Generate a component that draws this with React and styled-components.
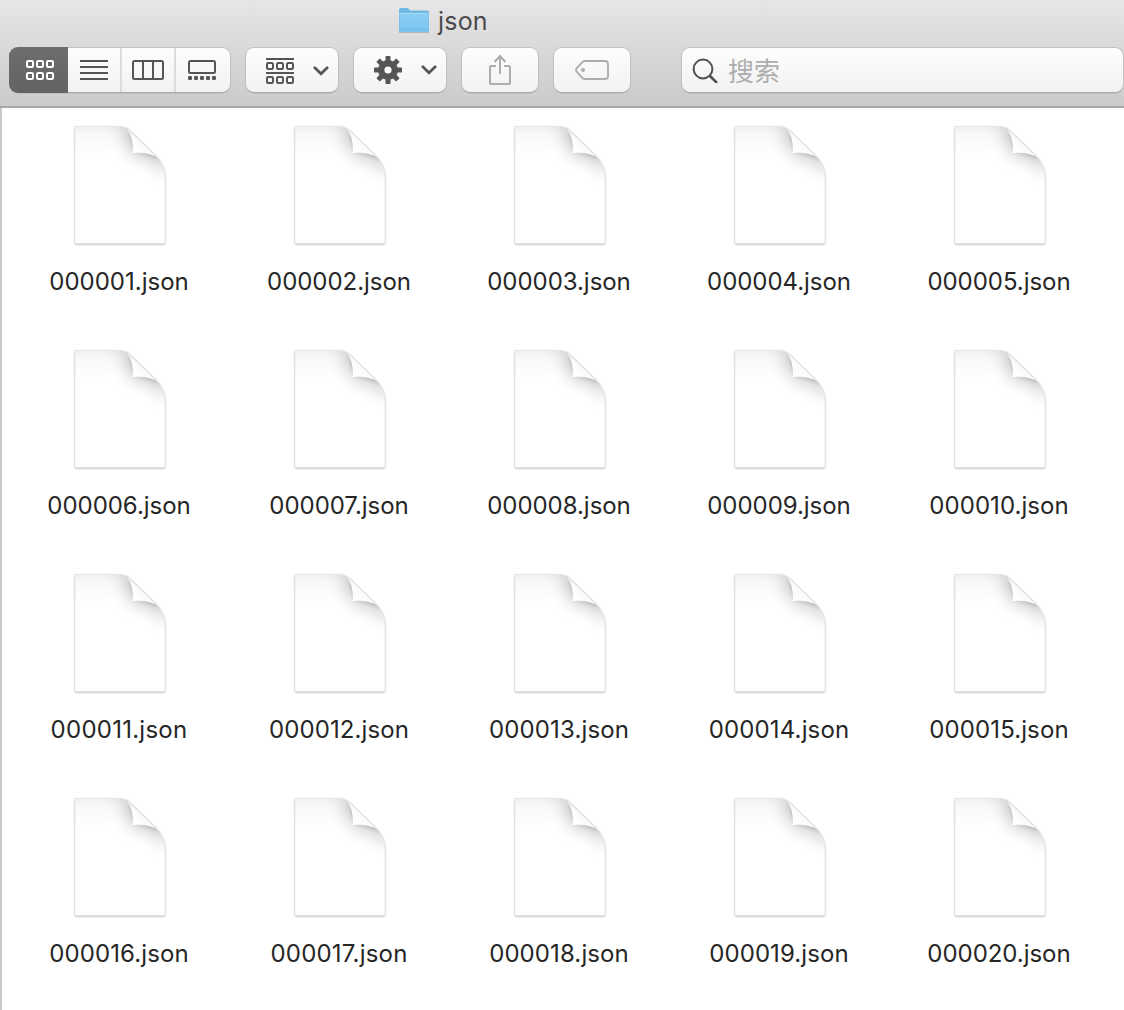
import React from 'react';
import styled, { createGlobalStyle } from 'styled-components';

const Global = createGlobalStyle`
  * { box-sizing: border-box; }
  html, body { margin: 0; padding: 0; background: #fff; }
  body { font-family: Inter, "Liberation Sans", "Noto Sans CJK SC", sans-serif; overflow: hidden; }
  svg { display: block; flex: none; }
`;

const Window = styled.div`
  width: 1124px;
  height: 1010px;
  display: flex;
  flex-direction: column;
  overflow: hidden;
`;

const Header = styled.header`
  height: 108px;
  flex: none;
  background: linear-gradient(#e6e6e6, #cbcbcb);
  border-bottom: 2px solid #a9a7a9;
`;

const TitleBar = styled.div`
  height: 47px;
  padding: 7px 0 0 398px;
  display: flex;
  align-items: flex-start;
  gap: 8px;
`;

const Title = styled.h1`
  margin: -1px 0 0;
  font-size: 25px;
  line-height: 30px;
  font-weight: 400;
  letter-spacing: 0.2px;
  color: #4b4b4b;
`;

const Toolbar = styled.div`
  display: flex;
  padding-left: 9px;
`;

const Group = styled.div`
  display: flex;
  flex: none;
  width: ${(p) => p.$width}px;
  height: 46px;
  margin-right: ${(p) => p.$after ?? 14}px;
  border: 1px solid #c0c0c0;
  border-bottom-color: #a9a9a9;
  border-radius: 9px;
  background: linear-gradient(#fdfdfd, #f2f2f2);
  box-shadow: 0 1px 0 rgba(0, 0, 0, 0.07);
`;

const Segment = styled.button`
  appearance: none;
  padding: 0;
  border: 0;
  border-right: ${(p) => (p.$divider ? '2px solid #dcdcdc' : '0')};
  flex: none;
  width: ${(p) => p.$width}px;
  display: flex;
  align-items: center;
  justify-content: center;
  background: transparent;
`;

const GallerySegment = styled(Segment)`
  padding-right: 2px;
`;

const ActiveSegment = styled(Segment)`
  margin: -1px 0 -1px -1px;
  padding-left: 2px;
  border-radius: 9px 0 0 9px;
  background: linear-gradient(#6d6d6d, #636363);
`;

const PlainButton = styled.button`
  appearance: none;
  border: 0;
  padding: 0;
  background: transparent;
  flex: 1;
  display: flex;
  align-items: center;
  justify-content: ${(p) => (p.$menu ? 'flex-start' : 'center')};
  padding-left: ${(p) => (p.$menu ? 20 : 0)}px;
  padding-top: ${(p) => p.$drop ?? 0}px;
  gap: 18.500px;
`;

const Search = styled.label`
  flex: 1;
  display: flex;
  align-items: center;
  gap: 9px;
  padding: 0 0 0 10px;
`;

const SearchText = styled.span`
  margin-bottom: 1px;
  font: 400 26px/30px "Noto Sans CJK SC", sans-serif;
  color: #adadad;
`;

const Body = styled.main`
  flex: 1;
  border-left: 2px solid #c8c7c1;
  padding: 14px 0 0 7px;
  display: grid;
  grid-template-columns: repeat(5, 220px);
  grid-auto-rows: 224px;
  background: #fff;
`;

const File = styled.figure`
  margin: 0;
  display: flex;
  flex-direction: column;
  align-items: center;
`;

const FileName = styled.figcaption`
  margin-top: 17px;
  font-size: 24px;
  line-height: 30px;
  letter-spacing: ${(p) => p.$tracking}px;
  font-weight: 400;
  color: #262626;
  white-space: nowrap;
`;

const dark = '#555';

const Folder = () => (
  <svg width="32" height="28" viewBox="0 0 32 28">
    <defs>
      <linearGradient id="fold" x1="0" y1="0" x2="0" y2="1">
        <stop offset="0" stopColor="#8acdf2" />
        <stop offset="1" stopColor="#79c5f1" />
      </linearGradient>
    </defs>
    <path d="M1 25.300h30" stroke="#8f9ca5" strokeWidth="1.400" opacity=".6" />
    <path d="M1 3q0-2 2-2h6q1.500 0 2 1.300t2 1.300h16q2 0 2 2V23.500q0 1.200-1.200 1.200H2.200Q1 24.700 1 23.500z" fill="#6fb8e2" />
    <path d="M1.500 6.500h29V23.300q0 .9-1 .9H2.500q-1 0-1-.9z" fill="url(#fold)" />
    <path d="M1.500 6.500h29" stroke="#a5dbf7" strokeWidth="1" />
    <path d="M1.500 22h29" stroke="#6ab6e3" strokeWidth="1" opacity=".7" />
  </svg>
);

const Cells = ({ y, color }) =>
  [0, 10, 20].map((x) => (
    <rect key={x} x={x + 1} y={y + 1} width="6" height="6" rx="1.200" fill="none" stroke={color} strokeWidth="2" />
  ));

const GridIcon = () => (
  <svg width="28" height="20" viewBox="0 0 28 20">
    <Cells y={0} color="#fff" />
    <Cells y={12} color="#fff" />
  </svg>
);

const ListIcon = () => (
  <svg width="28" height="20" viewBox="0 0 28 20">
    <path d="M0 1h28M0 7h28M0 13h28M0 19h28" stroke={dark} strokeWidth="2" />
  </svg>
);

const ColumnsIcon = () => (
  <svg width="32" height="20" viewBox="0 0 32 20">
    <path d="M11 1v18M21 1v18" stroke={dark} strokeWidth="2" />
    <rect x="1" y="1" width="30" height="18" rx="1.500" fill="none" stroke={dark} strokeWidth="2" />
  </svg>
);

const GalleryIcon = () => (
  <svg width="28" height="20" viewBox="0 0 28 20">
    <rect x="1" y="1" width="26" height="12" rx="1.500" fill="none" stroke={dark} strokeWidth="2" />
    {[0, 6, 12, 18, 24].map((x) => (
      <rect key={x} x={x} y="16" width="4" height="4" rx="1.200" fill={dark} />
    ))}
  </svg>
);

const ArrangeIcon = () => (
  <svg width="28" height="26" viewBox="0 0 28 26">
    <path d="M0 1h28M0 15h28" stroke={dark} strokeWidth="2" />
    <Cells y={4} color={dark} />
    <Cells y={18} color={dark} />
  </svg>
);

const GearIcon = () => (
  <svg width="28" height="28" viewBox="-14 -14 28 28">
    {[0, 45, 90, 135].map((a) => (
      <rect key={a} x="-2.500" y="-14" width="5" height="28" rx=".8" fill={dark} transform={`rotate(${a})`} />
    ))}
    <circle r="10" fill={dark} />
    <circle r="3.600" fill="#f8f8f8" />
  </svg>
);

const Chevron = () => (
  <svg width="16" height="10" viewBox="0 0 16 10">
    <path d="M1.800 1.800 8 7.800 14.200 1.800" fill="none" stroke={dark} strokeWidth="2.700" strokeLinecap="round" />
  </svg>
);

const ShareIcon = () => (
  <svg width="22" height="32" viewBox="0 0 22 32">
    <path d="M7 12H2q-1 0-1 1v16q0 1 1 1h18q1 0 1-1V13q0-1-1-1h-5" fill="none" stroke="#adadad" strokeWidth="2" />
    <path d="M11 20V2M5.500 8 11 2l5.500 6" fill="none" stroke="#adadad" strokeWidth="2" />
  </svg>
);

const TagIcon = () => (
  <svg width="34" height="20" viewBox="0 0 34 20">
    <path d="M10 1h20q3 0 3 3v12q0 3-3 3H10q-1.500 0-2.500-1L1.800 12q-1.500-2 0-4L7.500 2Q8.500 1 10 1z" fill="none" stroke="#adadad" strokeWidth="1.900" />
    <circle cx="8" cy="10" r="2" fill="#adadad" />
  </svg>
);

const SearchIcon = () => (
  <svg width="27" height="26" viewBox="0 -1 27 26">
    <circle cx="11" cy="11" r="9.400" fill="none" stroke="#505050" strokeWidth="2" />
    <path d="M17.500 17.500 25 25" stroke="#505050" strokeWidth="2.500" />
  </svg>
);

const SHEET = 'M5 5H48.500q7.500 0 12.500 5.200L85.500 34q9.500 9 9.500 22.500v65.500H5z';

const FileDefs = () => (
  <svg width="0" height="0" style={{ position: 'absolute' }} aria-hidden="true">
    <defs>
      <linearGradient id="topShade" x1="0" y1="0" x2="0" y2="1">
        <stop offset="0" stopColor="#f0f0f0" />
        <stop offset=".08" stopColor="#f9f9f9" />
        <stop offset=".24" stopColor="#fff" />
      </linearGradient>
      <linearGradient id="curl" x1="63" y1="31" x2="74" y2="19" gradientUnits="userSpaceOnUse">
        <stop offset="0" stopColor="#fff" />
        <stop offset=".7" stopColor="#fbfbfb" />
        <stop offset="1" stopColor="#f2f2f2" />
      </linearGradient>
      <filter id="drop" x="-10%" y="-10%" width="120%" height="120%">
        <feGaussianBlur stdDeviation="1" />
      </filter>
      <filter id="soft" x="-40%" y="-40%" width="180%" height="180%">
        <feGaussianBlur stdDeviation="9" />
      </filter>
      <filter id="tight" x="-40%" y="-40%" width="180%" height="180%">
        <feGaussianBlur stdDeviation="2.200" />
      </filter>
      <clipPath id="sheetClip"><path d={SHEET} /></clipPath>
    </defs>
  </svg>
);

const Page = () => (
  <svg width="100" height="128" viewBox="-1 0.500 100 128" overflow="visible">
    <path d={SHEET} fill="#000" opacity=".36" filter="url(#drop)" transform="translate(0 .7)" />
    <path d={SHEET} fill="url(#topShade)" />
    <g clipPath="url(#sheetClip)">
      <path d="M47 2Q60 10 61 34Q82 30 98 55V0z" fill="#000" opacity=".24" filter="url(#soft)" />
      <path d="M60 7L66 30Q79 29 92 41z" fill="#000" opacity=".28" filter="url(#tight)" />
    </g>
    <path d={SHEET} fill="none" stroke="#e2e2e2" strokeWidth=".6" />
    <path d="M56 6.700Q63.500 14 63 31.500Q75 30 86.500 35L61.200 10z" fill="url(#curl)" />
    <path d="M56 6.700 61 10.200 86 34.500" fill="none" stroke="#dadada" strokeWidth="1" />
  </svg>
);

const tracking = { 1: 0, 10: 0.05, 11: 0.25, 12: 0.1, 16: 0.1, 17: 0.2, 18: 0.1, 13: 0.15, 14: 0.15, 15: 0.1, 19: 0.1 };

const files = Array.from({ length: 20 }, (_, i) => ({
  name: `${String(i + 1).padStart(6, '0')}.json`,
  tracking: tracking[i + 1] ?? -0.04,
}));

export default function App() {
  return (
    <Window>
      <Global />
      <FileDefs />
      <Header>
        <TitleBar>
          <Folder />
          <Title>json</Title>
        </TitleBar>
        <Toolbar>
          <Group $width={222}>
            <ActiveSegment $width={59}><GridIcon /></ActiveSegment>
            <Segment $width={54} $divider><ListIcon /></Segment>
            <Segment $width={54} $divider><ColumnsIcon /></Segment>
            <GallerySegment $width={53}><GalleryIcon /></GallerySegment>
          </Group>
          <Group $width={94}>
            <PlainButton $menu $drop={2}><ArrangeIcon /><Chevron /></PlainButton>
          </Group>
          <Group $width={94}>
            <PlainButton $menu><GearIcon /><Chevron /></PlainButton>
          </Group>
          <Group $width={78}>
            <PlainButton><ShareIcon /></PlainButton>
          </Group>
          <Group $width={78} $after={50}>
            <PlainButton><TagIcon /></PlainButton>
          </Group>
          <Group $width={443} $after={0}>
            <Search><SearchIcon /><SearchText>搜索</SearchText></Search>
          </Group>
        </Toolbar>
      </Header>
      <Body>
        {files.map((f) => (
          <File key={f.name}>
            <Page />
            <FileName $tracking={f.tracking}>{f.name}</FileName>
          </File>
        ))}
      </Body>
    </Window>
  );
}
